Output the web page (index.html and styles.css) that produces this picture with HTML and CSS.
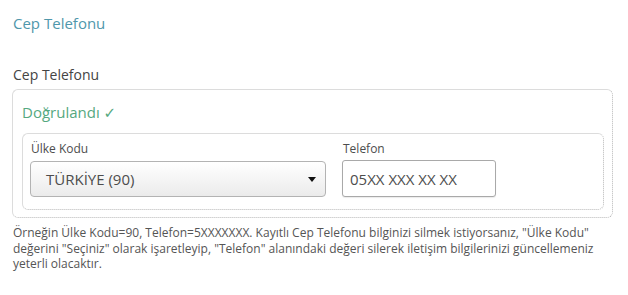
FILE: index.html
```html
<!DOCTYPE html>
<html lang="tr">
<head>
<meta charset="utf-8">
<link rel="stylesheet" href="styles.css">
</head>
<body>
<div class="page">
  <div class="title">Cep Telefonu</div>
  <div class="field-label">Cep Telefonu</div>
  <div class="outer">
    <div class="verified">Doğrulandı ✓</div>
    <div class="inner">
      <div class="col col-country">
        <div class="small-label">Ülke Kodu</div>
        <div class="select">
          <span class="select-text">TÜRKİYE (90)</span>
          <span class="caret"></span>
        </div>
      </div>
      <div class="col col-phone">
        <div class="small-label">Telefon</div>
        <div class="input">05XX XXX XX XX</div>
      </div>
    </div>
  </div>
  <p class="note">Örneğin Ülke Kodu=90, Telefon=5XXXXXXX. Kayıtlı Cep Telefonu bilginizi silmek istiyorsanız, "Ülke Kodu" değerini "Seçiniz" olarak işaretleyip, "Telefon" alanındaki değeri silerek iletişim bilgilerinizi güncellemeniz yeterli olacaktır.</p>
</div>
</body>
</html>
```
FILE: styles.css
```css
html, body {
  margin: 0;
  padding: 0;
  background: #ffffff;
}
body {
  font-family: "Open Sans", "DejaVu Sans", sans-serif;
  color: #333333;
}
.page {
  padding: 13px 16px 0 12px;
  width: 601px;
}
.title {
  font-size: 15px;
  line-height: 20px;
  height: 20px;
  color: #4f97ab;
  padding-left: 1px;
}
.field-label {
  margin-top: 32px;
  font-size: 14px;
  line-height: 20px;
  color: #444444;
  padding-left: 1px;
}
.outer {
  margin-top: 4px;
  border-top: 1px solid #dcdcdc;
  border-left: 1px solid #dcdcdc;
  border-right: 1px dotted #b8b8b8;
  border-bottom: 1px dotted #b8b8b8;
  border-radius: 6px;
  padding: 12px 8px 7px 9px;
}
.verified {
  font-size: 15px;
  line-height: 20px;
  color: #55a87f;
}
.inner {
  margin-top: 11px;
  border-top: 1px solid #dcdcdc;
  border-left: 1px solid #dcdcdc;
  border-right: 1px dotted #b8b8b8;
  border-bottom: 1px dotted #b8b8b8;
  border-radius: 6px;
  padding: 7px 8px 12px 7px;
  display: flex;
  gap: 16px;
}
.small-label {
  font-size: 12px;
  line-height: 16px;
  color: #4d4d4d;
  padding-left: 1px;
}
.col-country {
  width: 296px;
}
.col-phone {
  width: 154px;
}
.select {
  margin-top: 4px;
  box-sizing: border-box;
  height: 36px;
  border: 1px solid #b3b3b3;
  border-radius: 4px;
  background: linear-gradient(#ffffff, #ebebeb);
  display: flex;
  align-items: center;
  justify-content: space-between;
  padding: 0 9px 0 15px;
}
.select-text {
  font-size: 15px;
  color: #4d4d4d;
}
.caret {
  width: 0;
  height: 0;
  border-left: 4px solid transparent;
  border-right: 4px solid transparent;
  border-top: 5px solid #111111;
}
.input {
  margin-top: 3px;
  box-sizing: border-box;
  height: 37px;
  border: 1px solid #a9a9a9;
  border-radius: 3px;
  box-shadow: 0 1px 1px rgba(0,0,0,0.08);
  background: #ffffff;
  display: flex;
  align-items: center;
  padding-left: 7px;
  font-size: 15px;
  color: #4d4d4d;
}
.note {
  margin: 7px 0 0 1px;
  font-size: 12px;
  line-height: 15.5px;
  color: #555555;
}
```
